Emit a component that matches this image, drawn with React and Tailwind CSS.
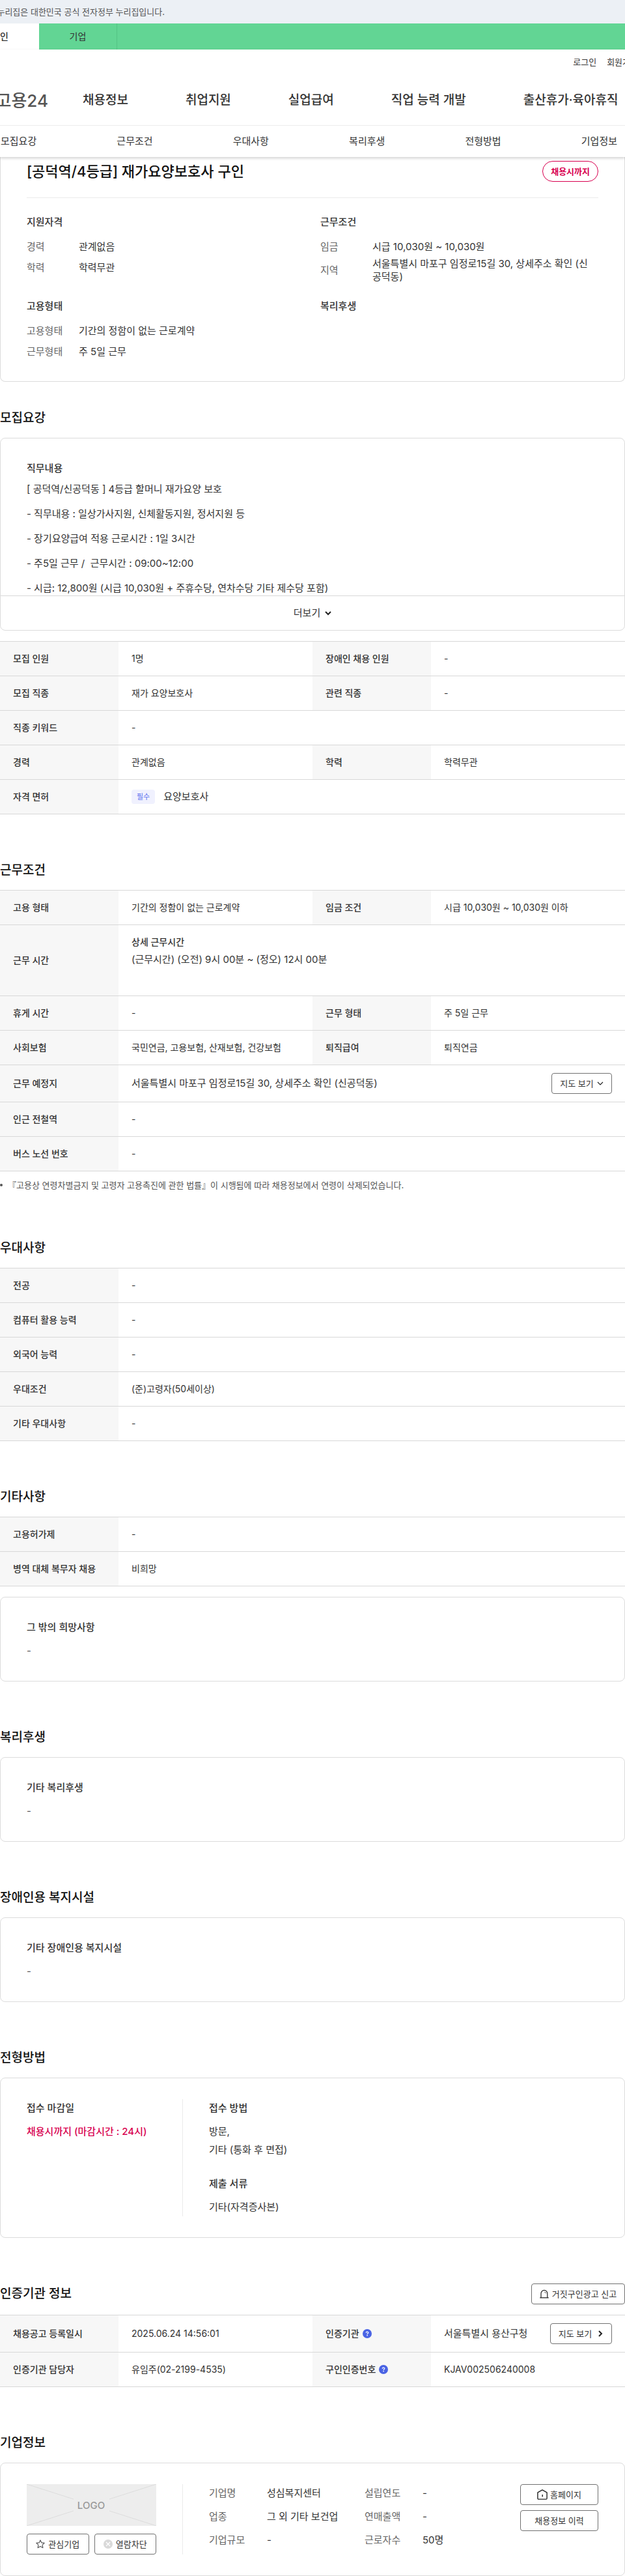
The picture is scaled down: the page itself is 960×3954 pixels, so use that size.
import React from "react";

const cols = (four) => (
  <colgroup>
    <col className="w-[182px]" />
    <col />
    {four && <col className="w-[182px]" />}
    {four && <col />}
  </colgroup>
);

function InfoTable({ label, four = false, children }) {
  return (
    <table
      aria-label={label}
      className="w-full table-fixed border-separate border-spacing-0 border-t border-[#d8d8d8] text-left text-sm"
    >
      {cols(four)}
      <tbody>{children}</tbody>
    </table>
  );
}

function Th({ children }) {
  return (
    <th scope="row" className="border-b border-[#d8d8d8] bg-[#f7f7f7] px-5 align-middle font-medium text-[#333]">
      {children}
    </th>
  );
}

function Td({ children, span }) {
  return (
    <td colSpan={span} className="border-b border-[#d8d8d8] px-5 align-middle">
      {children}
    </td>
  );
}

function Row({ items, wide = false }) {
  return (
    <tr className="h-[53px]">
      {items.map(([name, value], i) => (
        <React.Fragment key={i}>
          <Th>{name}</Th>
          <Td span={wide ? 3 : 1}>{value}</Td>
        </React.Fragment>
      ))}
    </tr>
  );
}

function Heading({ children, space = "pt-[72px] pb-4", id }) {
  return (
    <h2 id={id} className={"text-[19px] leading-7 font-medium text-[#111] " + space}>
      {children}
    </h2>
  );
}

function Box({ children }) {
  return <div className="rounded-lg border border-[#dcdcdc] px-10 py-8">{children}</div>;
}

function NoteBox({ title }) {
  return (
    <Box>
      <h3 className="text-[15px] leading-7 font-medium">{title}</h3>
      <p className="pt-2 text-[15px] leading-7 text-[#555]">-</p>
    </Box>
  );
}

function Button({ children, className = "" }) {
  return (
    <button
      type="button"
      className={
        "inline-flex h-8 shrink-0 items-center justify-center rounded border border-[#717171] bg-white text-[13px] leading-none whitespace-nowrap " +
        className
      }
    >
      {children}
    </button>
  );
}

function Chevron({ className = "", width = 2 }) {
  return (
    <svg viewBox="0 0 10 10" className={"h-[10px] w-[10px] " + className} fill="none" stroke="#222" strokeWidth={width} aria-hidden="true">
      <path d="M1 3l4 4 4-4" />
    </svg>
  );
}

function Help({ label }) {
  return (
    <button type="button" aria-label={label} className="ml-[5px] inline-flex align-[-2px]">
      <svg viewBox="0 0 14 14" className="h-[14px] w-[14px]" aria-hidden="true">
        <circle cx="7" cy="7" r="7" fill="#4a63e4" />
        <path d="M5.3 5.7c0-2.1 3.4-2.1 3.4-.1 0 1.2-1.6 1.1-1.6 2.3" fill="none" stroke="#fff" strokeWidth="1.3" />
        <circle cx="7.1" cy="9.7" r=".85" fill="#fff" />
      </svg>
    </button>
  );
}

function Siren() {
  return (
    <svg viewBox="0 0 14 14" className="mr-[5px] h-[14px] w-[14px]" fill="none" stroke="#222" aria-hidden="true">
      <path d="M2 12.6V6.6a4.9 5.2 0 0 1 9.8 0v6M.3 12.9h13.4" strokeWidth="1.2" />
      <path d="M7.4 4.2c1.2.1 2 .8 2.2 2" strokeWidth=".9" />
    </svg>
  );
}

function Home() {
  return (
    <svg viewBox="0 0 16 16" className="mr-1 h-4 w-4" fill="none" stroke="#222" strokeWidth="1.4" strokeLinejoin="round" aria-hidden="true">
      <path d="M.9 4.9L8 .9l7.1 4v8.9a1.3 1.3 0 0 1-1.3 1.3H2.2A1.3 1.3 0 0 1 .9 13.8z" />
      <path d="M8.2 8v3.5" />
    </svg>
  );
}

function Star() {
  return (
    <svg viewBox="0 0 14 14" className="mr-[5px] h-[14px] w-[14px]" fill="none" stroke="#555" strokeWidth="1.1" strokeLinejoin="round" aria-hidden="true">
      <path d="M7 .9l1.8 4 4.4.5L10 8.3l.9 4.4L7 10.5l-3.9 2.2.9-4.4L.8 5.4l4.4-.5z" />
    </svg>
  );
}

function Block() {
  return (
    <svg viewBox="0 0 14 14" className="mr-[5px] h-[14px] w-[14px]" aria-hidden="true">
      <circle cx="7" cy="7" r="7" fill="#d9d9d9" />
      <path d="M4 4l6 6M10 4l-6 6" stroke="#fff" strokeWidth="1.3" />
    </svg>
  );
}

function Summary({ title, items }) {
  return (
    <div>
      <h3 className="text-[15px] leading-7 font-medium">{title}</h3>
      <dl className="pt-2 text-[15px]">
        {items.map(([k, v]) => (
          <div key={k} className="flex min-h-8 items-center leading-5">
            <dt className="w-20 shrink-0 text-[#666]">{k}</dt>
            <dd className="max-w-[342px] break-all">{v}</dd>
          </div>
        ))}
      </dl>
    </div>
  );
}

function Facts({ items, className }) {
  return (
    <dl className={"text-[15px] leading-5 " + className}>
      {items.map(([k, v]) => (
        <React.Fragment key={k}>
          <dt className="text-[#666]">{k}</dt>
          <dd>{v}</dd>
        </React.Fragment>
      ))}
    </dl>
  );
}

const menu = ["채용정보", "취업지원", "실업급여", "직업 능력 개발", "출산휴가·육아휴직"];
const sections = [
  ["모집요강", "#recruit"],
  ["근무조건", "#work"],
  ["우대사항", "#prefer"],
  ["복리후생", "#welfare"],
  ["전형방법", "#apply"],
  ["기업정보", "#company"],
];

export default function App() {
  return (
    <div className="overflow-x-hidden bg-white font-['Inter','Noto_Sans_CJK_KR',sans-serif] text-[#333]">
      <div className="h-9 overflow-hidden bg-[#ecf0f5]">
        <p className="flex w-[253px] justify-end text-[13px] leading-9 whitespace-nowrap text-[#555]">
          이 누리집은 대한민국 공식 전자정부 누리집입니다.
        </p>
      </div>
      <div className="flex h-10 bg-[#62d594] text-sm">
        <a href="#personal" className="flex w-[60px] items-center justify-end bg-white pr-[47px] font-medium whitespace-nowrap">
          개인
        </a>
        <a href="#corp" className="flex w-[120px] items-center justify-center border-r border-[#55c485]">
          기업
        </a>
      </div>

      <header className="relative bg-white shadow-[0_2px_4px_rgba(0,0,0,0.18)]">
        <div className="flex h-10 items-center justify-end gap-4 overflow-hidden text-[13px] whitespace-nowrap">
          <a href="#login">로그인</a>
          <a href="#join" className="-mr-5">회원가입</a>
        </div>
        <div className="flex h-[76px] items-center whitespace-nowrap">
          <a href="#home" className="flex w-[74px] justify-end text-[26px] font-medium text-[#555]">
            고용24
          </a>
          <nav aria-label="주요 메뉴" className="ml-[53px] flex gap-[88px] text-[19px] font-medium">
            {menu.map((m) => (
              <a key={m} href="#menu">{m}</a>
            ))}
          </nav>
        </div>
        <nav aria-label="채용공고 메뉴" className="flex h-[49px] items-center justify-between border-t border-[#ededed] pr-3 pl-px text-[15px]">
          {sections.map(([s, href]) => (
            <a key={s} href={href}>{s}</a>
          ))}
        </nav>
      </header>

      <main>
        <section className="rounded-b-lg border-x border-b border-[#dcdcdc] px-10 pb-[29px]">
          <div className="flex items-center justify-between border-b border-[#ebebeb] pt-[6px] pb-6">
            <h1 className="text-[22px] leading-8 font-medium text-[#111]">[공덕역/4등급] 재가요양보호사 구인</h1>
            <span className="rounded-full border border-[#d8004f] px-3 text-[13px] leading-[30px] font-bold text-[#d8004f]">
              채용시까지
            </span>
          </div>
          <div className="grid grid-cols-[451px_1fr] gap-y-[21px] pt-[23px]">
            <Summary title="지원자격" items={[["경력", "관계없음"], ["학력", "학력무관"]]} />
            <Summary
              title="근무조건"
              items={[
                ["임금", "시급 10,030원 ~ 10,030원"],
                ["지역", "서울특별시 마포구 임정로15길 30, 상세주소 확인 (신공덕동)"],
              ]}
            />
            <Summary title="고용형태" items={[["고용형태", "기간의 정함이 없는 근로계약"], ["근무형태", "주 5일 근무"]]} />
            <Summary title="복리후생" items={[]} />
          </div>
        </section>

        <Heading space="pt-[42px] pb-4" id="recruit">모집요강</Heading>
        <div className="rounded-lg border border-[#dcdcdc]">
          <div className="px-10 pt-8 text-[15px]">
            <h3 className="leading-7 font-medium">직무내용</h3>
            <div className="-mt-px -mb-2 leading-[38px] whitespace-pre-wrap">
              <p>[ 공덕역/신공덕동 ] 4등급 할머니 재가요양 보호</p>
              <p>- 직무내용 : 일상가사지원, 신체활동지원, 정서지원 등</p>
              <p>- 장기요양급여 적용 근로시간 : 1일 3시간</p>
              <p>{"- 주5일 근무 /  근무시간 : 09:00~12:00"}</p>
              <p>- 시급: 12,800원 (시급 10,030원 + 주휴수당, 연차수당 기타 제수당 포함)</p>
            </div>
          </div>
          <button type="button" className="flex h-[53px] w-full items-center justify-center gap-[7px] border-t border-[#d8d8d8] text-[15px]">
            더보기 <Chevron />
          </button>
        </div>
        <div className="pt-4">
          <InfoTable four label="모집요강">
            <Row items={[["모집 인원", "1명"], ["장애인 채용 인원", "-"]]} />
            <Row items={[["모집 직종", "재가 요양보호사"], ["관련 직종", "-"]]} />
            <Row wide items={[["직종 키워드", "-"]]} />
            <Row items={[["경력", "관계없음"], ["학력", "학력무관"]]} />
            <Row
              wide
              items={[
                [
                  "자격 면허",
                  <span className="flex items-center gap-[13px] text-[15px]">
                    <span className="rounded bg-[#f0f1fe] px-2 text-[11px] leading-[22px] text-[#5b70ee]">필수</span>
                    요양보호사
                  </span>,
                ],
              ]}
            />
          </InfoTable>
        </div>

        <Heading id="work">근무조건</Heading>
        <InfoTable four label="근무조건">
          <Row items={[["고용 형태", "기간의 정함이 없는 근로계약"], ["임금 조건", "시급 10,030원 ~ 10,030원 이하"]]} />
          <tr className="h-[109px]">
            <Th>근무 시간</Th>
            <Td span={3}>
              <div className="pb-7">
                <p className="leading-[26px] font-medium">상세 근무시간</p>
                <p className="text-[15px] leading-7">(근무시간) (오전) 9시 00분 ~ (정오) 12시 00분</p>
              </div>
            </Td>
          </tr>
          <Row items={[["휴게 시간", "-"], ["근무 형태", "주 5일 근무"]]} />
          <Row items={[["사회보험", "국민연금, 고용보험, 산재보험, 건강보험"], ["퇴직급여", "퇴직연금"]]} />
          <tr className="h-[57px]">
            <Th>근무 예정지</Th>
            <Td span={3}>
              <div className="flex items-center justify-between text-[15px]">
                서울특별시 마포구 임정로15길 30, 상세주소 확인 (신공덕동)
                <Button className="w-[93px] gap-[5px]">
                  지도 보기 <Chevron width={1.2} />
                </Button>
              </div>
            </Td>
          </tr>
          <Row wide items={[["인근 전철역", "-"]]} />
          <Row wide items={[["버스 노선 번호", "-"]]} />
        </InfoTable>
        <p className="flex items-center gap-2 pt-[10px] text-[13px] leading-[22px] text-[#555]">
          <span className="h-1 w-1 rounded-full bg-[#555]" />
          『고용상 연령차별금지 및 고령자 고용촉진에 관한 법률』이 시행됨에 따라 채용정보에서 연령이 삭제되었습니다.
        </p>

        <Heading id="prefer">우대사항</Heading>
        <InfoTable label="우대사항">
          <Row items={[["전공", "-"]]} />
          <Row items={[["컴퓨터 활용 능력", "-"]]} />
          <Row items={[["외국어 능력", "-"]]} />
          <Row items={[["우대조건", "(준)고령자(50세이상)"]]} />
          <Row items={[["기타 우대사항", "-"]]} />
        </InfoTable>

        <Heading>기타사항</Heading>
        <InfoTable label="기타사항">
          <Row items={[["고용허가제", "-"]]} />
          <Row items={[["병역 대체 복무자 채용", "비희망"]]} />
        </InfoTable>
        <div className="pt-4">
          <NoteBox title="그 밖의 희망사항" />
        </div>

        <Heading id="welfare">복리후생</Heading>
        <NoteBox title="기타 복리후생" />

        <Heading>장애인용 복지시설</Heading>
        <NoteBox title="기타 장애인용 복지시설" />

        <Heading id="apply">전형방법</Heading>
        <Box>
          <div className="flex text-[15px] leading-7">
            <div className="w-60 border-r border-[#ebebeb]">
              <h3 className="font-medium">접수 마감일</h3>
              <p className="pt-2 font-medium text-[#d8004f]">채용시까지 (마감시간 : 24시)</p>
            </div>
            <div className="pl-10">
              <h3 className="font-medium">접수 방법</h3>
              <p className="pt-2">방문,</p>
              <p>기타 (통화 후 면접)</p>
              <h3 className="pt-6 font-medium">제출 서류</h3>
              <p className="pt-2">기타(자격증사본)</p>
            </div>
          </div>
        </Box>

        <div className="flex items-center justify-between pt-[70px] pb-4">
          <Heading space="">인증기관 정보</Heading>
          <Button className="w-36">
            <Siren />
            거짓구인광고 신고
          </Button>
        </div>
        <InfoTable four label="인증기관 정보">
          <tr className="h-[57px]">
            <Th>채용공고 등록일시</Th>
            <Td>2025.06.24 14:56:01</Td>
            <Th>
              인증기관
              <Help label="인증기관 도움말" />
            </Th>
            <Td>
              <div className="flex items-center justify-between text-[15px]">
                서울특별시 용산구청
                <Button className="w-[95px] gap-2">
                  지도 보기 <Chevron className="-rotate-90" />
                </Button>
              </div>
            </Td>
          </tr>
          <Row
            items={[
              ["인증기관 담당자", "유임주(02-2199-4535)"],
              [
                <>
                  구인인증번호
                  <Help label="구인인증번호 도움말" />
                </>,
                "KJAV002506240008",
              ],
            ]}
          />
        </InfoTable>

        <Heading id="company">기업정보</Heading>
        <Box>
          <div className="flex items-stretch">
            <div className="flex w-60 shrink-0 flex-col gap-3 border-r border-[#ebebeb] pr-10">
              <svg viewBox="0 0 199 64" className="h-16 w-full" role="img" aria-label="LOGO">
                <rect width="199" height="64" fill="#ededed" />
                <path d="M0 0l72 23M199 0l-72 23M0 64l72-23M199 64l-72-23" stroke="#dcdcdc" strokeWidth="1" />
                <text x="99" y="38" textAnchor="middle" fontSize="15" fontWeight="500" fill="#999">LOGO</text>
              </svg>
              <div className="grid grid-cols-2 gap-2">
                <Button>
                  <Star />
                  관심기업
                </Button>
                <Button>
                  <Block />
                  열람차단
                </Button>
              </div>
            </div>
            <Facts
              className="ml-10 grid w-[239px] grid-cols-[89px_1fr] gap-y-4 self-start pt-1"
              items={[["기업명", "성심복지센터"], ["업종", "그 외 기타 보건업"], ["기업규모", "-"]]}
            />
            <Facts
              className="grid w-[160px] grid-cols-[89px_1fr] gap-y-4 self-start pt-1"
              items={[["설립연도", "-"], ["연매출액", "-"], ["근로자수", "50명"]]}
            />
            <div className="ml-auto flex w-[120px] flex-col gap-2">
              <Button>
                <Home />
                홈페이지
              </Button>
              <Button>채용정보 이력</Button>
            </div>
          </div>
        </Box>
      </main>
    </div>
  );
}
